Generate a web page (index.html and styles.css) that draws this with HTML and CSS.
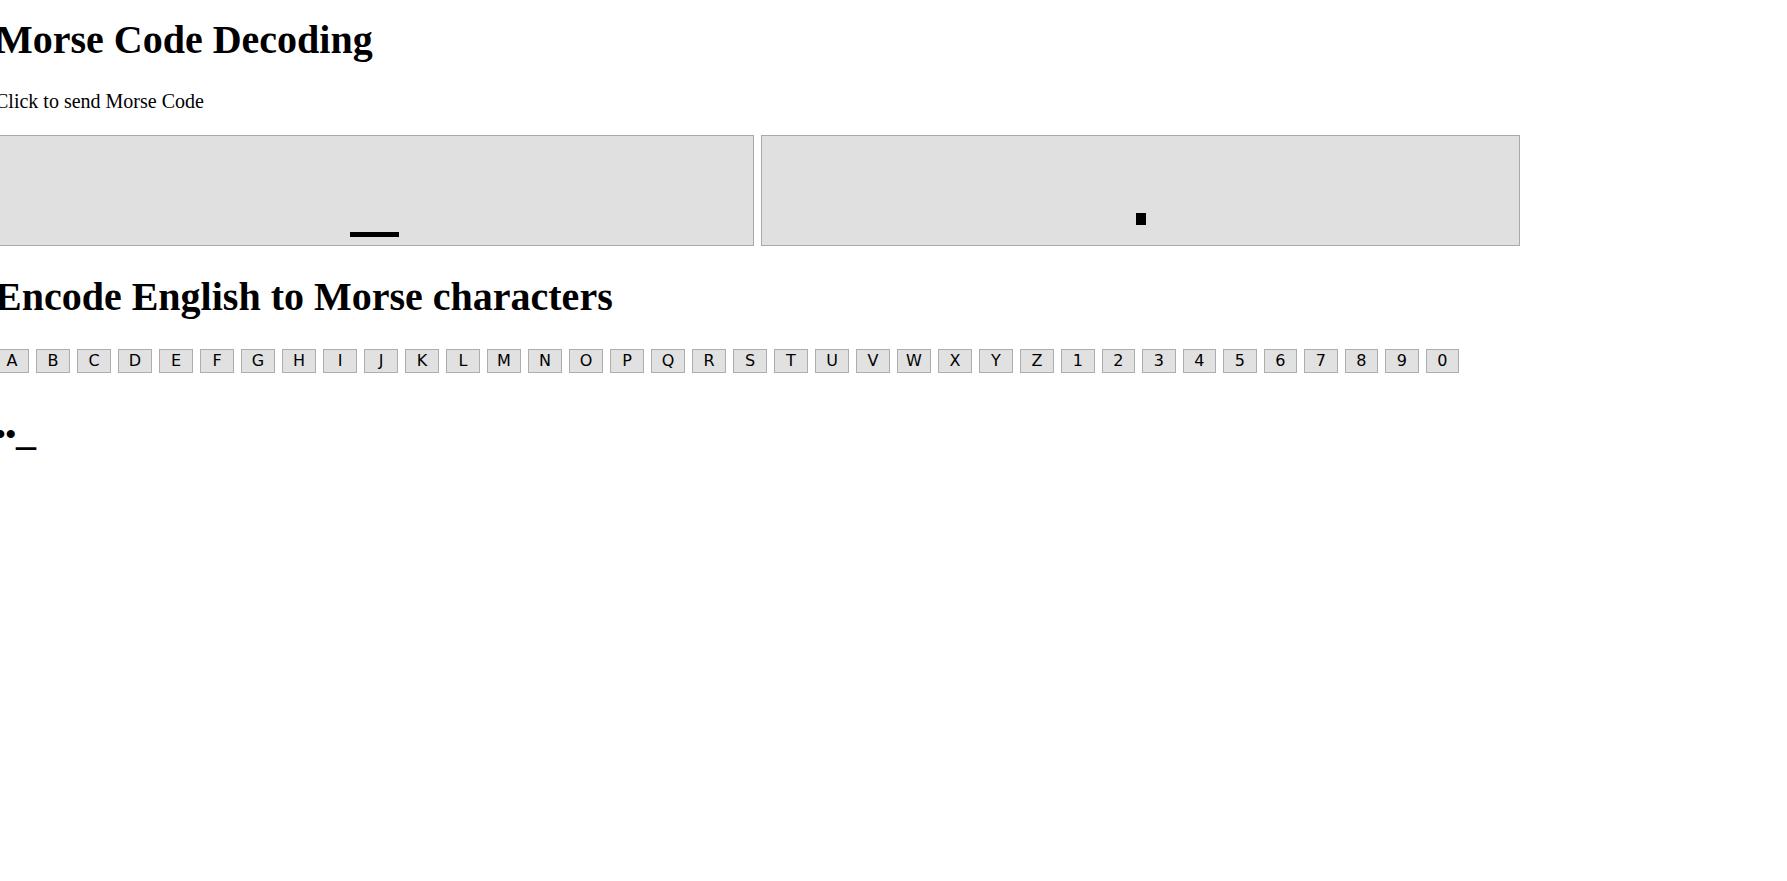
FILE: index.html
```html
<!DOCTYPE html>
<html lang="en">
<head>
<meta charset="utf-8">
<title>Morse Code Decoding</title>
<link rel="stylesheet" href="styles.css">
</head>
<body>
<main class="page">
  <h1 class="title">Morse Code Decoding</h1>
  <p class="hint">Click to send Morse Code</p>
  <div class="pads">
    <div class="pad"><span class="mark dash"></span></div>
    <div class="pad"><span class="mark dot"></span></div>
  </div>
  <h1 class="title title-encode">Encode English to Morse characters</h1>
  <div class="keys">
    <button class="key">A</button><button class="key">B</button><button class="key">C</button><button class="key">D</button><button class="key">E</button><button class="key">F</button><button class="key">G</button><button class="key">H</button><button class="key">I</button><button class="key">J</button><button class="key">K</button><button class="key">L</button><button class="key">M</button><button class="key">N</button><button class="key">O</button><button class="key">P</button><button class="key">Q</button><button class="key">R</button><button class="key">S</button><button class="key">T</button><button class="key">U</button><button class="key">V</button><button class="key">W</button><button class="key">X</button><button class="key">Y</button><button class="key">Z</button><button class="key key-num">1</button><button class="key key-num">2</button><button class="key key-num">3</button><button class="key key-num">4</button><button class="key key-num">5</button><button class="key key-num">6</button><button class="key key-num">7</button><button class="key key-num">8</button><button class="key key-num">9</button><button class="key key-num">0</button>
  </div>
  <h2 class="output">••<span class="under">_</span></h2>
</main>
</body>
</html>
```
FILE: styles.css
```css
html, body {
  margin: 0;
  padding: 0;
  background: #ffffff;
}

body {
  font-family: "Liberation Serif", "Times New Roman", serif;
  font-size: 20px;
  color: #000000;
}

.page {
  margin-left: -5px;
  padding-top: 16.5px;
}

.title {
  margin: 0;
  font-size: 40px;
  line-height: 46px;
  font-weight: bold;
}

.hint {
  margin: 27px 0 0 0;
  font-size: 20px;
  line-height: 23px;
}

.pads {
  display: flex;
  gap: 7px;
  margin-top: 22px;
}

.pad {
  box-sizing: border-box;
  width: 759px;
  height: 111px;
  background: #e0e0e0;
  border: 1px solid #a9a9a9;
  display: flex;
  justify-content: center;
  align-items: flex-end;
}

.mark {
  display: block;
  background: #000000;
}

.dash {
  width: 49px;
  height: 5px;
  margin-bottom: 8px;
}

.dot {
  width: 10px;
  height: 12px;
  margin-bottom: 20px;
}

.title-encode {
  margin-top: 28.5px;
}

.keys {
  display: flex;
  gap: 7px;
  margin-top: 28.5px;
}

.key {
  box-sizing: border-box;
  width: 34px;
  height: 24px;
  padding: 0;
  margin: 0;
  background: #e1e1e1;
  border: 1px solid #adadad;
  border-radius: 0;
  color: #000000;
  font-family: "DejaVu Sans", Verdana, sans-serif;
  font-size: 16px;
  line-height: 22px;
  text-align: center;
}

.key-num {
  width: 33.5px;
}

.output {
  margin: 44px 0 0 0;
  font-size: 30px;
  line-height: 34px;
  font-weight: bold;
}

.under {
  font-size: 40px;
  line-height: 0;
}
```
